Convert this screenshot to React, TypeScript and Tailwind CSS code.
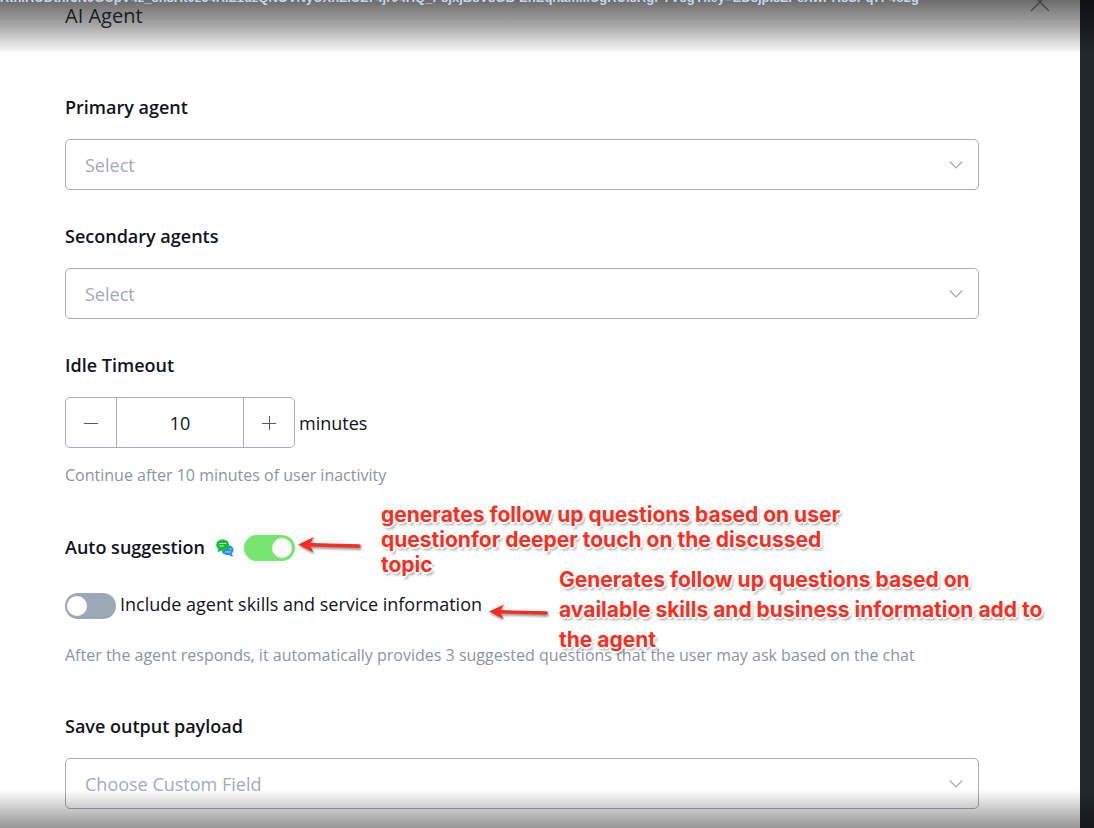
import React, { ReactNode, useState } from "react";

interface SelectFieldProps {
  id: string;
  label: string;
  placeholder: string;
}

interface SwitchProps {
  id: string;
  checked: boolean;
  onChange: (checked: boolean) => void;
}

interface NoteProps {
  className: string;
  children: ReactNode;
}

const SelectField: React.FC<SelectFieldProps> = ({
  id,
  label,
  placeholder,
}) => {
  return (
    <div className="flex flex-col gap-5">
      <label htmlFor={id} className="font-semibold">
        {label}
      </label>
      <div className="relative">
        <select
          id={id}
          className="w-full h-[51px] appearance-none rounded-[5px] border border-[#a5adb9] bg-white px-[19px] text-[#a2aab8]"
        >
          <option>{placeholder}</option>
        </select>
        <svg
          className="pointer-events-none absolute right-4 top-5 h-3 w-3.5"
          viewBox="0 0 14 12"
          fill="none"
          stroke="#a5abb5"
          strokeWidth="1.2"
          aria-hidden="true"
        >
          <path d="M0.8 2.5 L7 9 L13.2 2.5" />
        </svg>
      </div>
    </div>
  );
};

const Switch: React.FC<SwitchProps> = ({ id, checked, onChange }) => {
  return (
    <span className="relative flex h-[26px] w-[51px]">
      <input
        id={id}
        type="checkbox"
        role="switch"
        checked={checked}
        onChange={(e) => onChange(e.target.checked)}
        className="peer h-full w-full appearance-none rounded-full bg-[#9da7b5] checked:bg-[#77e570]"
      />
      <span className="pointer-events-none absolute left-0.5 top-[3px] h-5 w-5 rounded-full bg-white peer-checked:left-7" />
    </span>
  );
};

const ChatIcon = () => (
  <svg className="h-[18px] w-[18px]" viewBox="0 0 18 18" aria-hidden="true">
    <path
      d="M11.5 6c3.500 0 6 2.200 6 5.100 0 1.500-.6 2.700-1.600 3.500.1 1.100.5 1.900 1.200 2.900-1.500 0-2.700-.5-3.600-1.500-4.500.6-8-1.500-8-4.900C5.500 8.200 8 6 11.500 6z"
      fill="#2793f0"
    />
    <path
      d="M6.700.4c3.700 0 6.400 2.400 6.400 5.600s-2.700 5.600-6.400 5.600c-.6 0-1.200-.1-1.700-.2-.9.900-2.200 1.400-3.800 1.300.8-.8 1.200-1.600 1.200-2.600C1.100 9.100.3 7.600.3 6 .3 2.800 3 .4 6.700.4z"
      fill="#16b935"
    />
    <path d="M3.200 4.500h7M3.200 7h5" stroke="#b9f2bd" strokeWidth="1" />
    <path d="M13.800 10h1.800M9 13h5.500" stroke="#b8ddff" strokeWidth="1" />
  </svg>
);

const Arrow: React.FC<{ className: string }> = ({ className }) => (
  <svg className={className} viewBox="0 0 66 20" aria-hidden="true">
    <path
      d="M1 9.500 L17 2 L13.500 8 L62 9.300 A1.800 1.800 0 0 1 62 12.900 L13.500 11.500 L16.500 17.500 Z"
      fill="#f92d1f"
    />
  </svg>
);

const Note: React.FC<NoteProps> = ({ className, children }) => (
  <p
    className={`absolute whitespace-nowrap font-[Inter,sans-serif] text-[21px] font-bold text-[#fb2d20] [text-shadow:1px_1px_0_#fff,-1px_-1px_0_#fff,1px_-1px_0_#fff,-1px_1px_0_#fff,2px_0_0_#fff,0_2px_0_#fff,-2px_0_0_#fff,0_-2px_0_#fff,2px_3px_3px_#0006] ${className}`}
  >
    {children}
  </p>
);

const App = () => {
  const [minutes, setMinutes] = useState<number>(10);
  const [suggest, setSuggest] = useState<boolean>(true);
  const [skills, setSkills] = useState<boolean>(false);

  return (
    <div className="relative flex h-screen overflow-hidden bg-[#23282c] font-['Open_Sans','Noto_Sans',sans-serif] text-[18px] leading-6 text-[#101420]">
      <main className="mr-3.5 flex-1 bg-white pl-[65px] pr-[101px]">
        <header className="flex h-[95px] justify-between">
          <h1 className="pt-1 text-[20px] text-[#30363b]">AI Agent</h1>
          <button
            type="button"
            aria-label="Close"
            className="-mr-[71px] h-3 w-5"
          >
            <svg
              viewBox="0 0 20 12"
              fill="none"
              stroke="#8f9499"
              strokeWidth="1.500"
            >
              <path d="M1 11 L12 0 M19 11 L8 0" />
            </svg>
          </button>
        </header>

        <form>
          <div className="flex flex-col gap-[34px]">
            <SelectField
              id="primary"
              label="Primary agent"
              placeholder="Select"
            />
            <SelectField
              id="secondary"
              label="Secondary agents"
              placeholder="Select"
            />
            <div className="flex flex-col">
              <label htmlFor="timeout" className="font-semibold">
                Idle Timeout
              </label>
              <div className="mt-5 flex items-center gap-1">
                <div className="flex h-[51px] w-[230px] rounded-[5px] border border-[#a5adb9]">
                  <button
                    type="button"
                    aria-label="Decrease"
                    className="flex w-[51px] items-center justify-center border-r border-[#a5adb9]"
                    onClick={() => setMinutes(minutes - 1)}
                  >
                    <svg
                      className="h-3.5 w-3.5"
                      viewBox="0 0 14 14"
                      stroke="#555b64"
                    >
                      <path d="M0 7.500 H14" />
                    </svg>
                  </button>
                  <input
                    id="timeout"
                    type="text"
                    inputMode="numeric"
                    value={minutes}
                    onChange={(e) => setMinutes(Number(e.target.value) || 0)}
                    className="min-w-0 flex-1 text-center"
                  />
                  <button
                    type="button"
                    aria-label="Increase"
                    className="flex w-[51px] items-center justify-center border-l border-[#a5adb9]"
                    onClick={() => setMinutes(minutes + 1)}
                  >
                    <svg
                      className="h-3.5 w-3.5"
                      viewBox="0 0 14 14"
                      stroke="#555b64"
                    >
                      <path d="M0 7.500 H14 M7.500 0 V14" />
                    </svg>
                  </button>
                </div>
                <span>minutes</span>
              </div>
            </div>
          </div>
          <p className="mt-[15px] text-[16px] text-[#8a959e]">
            Continue after {minutes} minutes of user inactivity
          </p>

          <div className="mt-12 flex items-start">
            <label htmlFor="suggest" className="font-semibold">
              Auto suggestion
            </label>
            <span className="ml-[11px] mr-2.5 pt-1">
              <ChatIcon />
            </span>
            <Switch id="suggest" checked={suggest} onChange={setSuggest} />
          </div>
          <div className="mt-8 flex items-start gap-1">
            <Switch id="skills" checked={skills} onChange={setSkills} />
            <label htmlFor="skills" className="-mt-px">
              Include agent skills and service information
            </label>
          </div>
          <p className="mb-[47px] mt-6 text-[16px] text-[#8a959e]">
            After the agent responds, it automatically provides 3 suggested
            questions that the user may ask based on the chat
          </p>

          <SelectField
            id="payload"
            label="Save output payload"
            placeholder="Choose Custom Field"
          />
        </form>
      </main>

      {/* callouts drawn over the form */}
      <Arrow className="absolute left-[297px] top-[535px] h-5 w-[66px] drop-shadow-[1px_2px_1px_#0006]" />
      <Note className="left-[381px] top-[502px] leading-[25px]">
        generates follow up questions based on user
        <br />
        questionfor deeper touch on the discussed
        <br />
        topic
      </Note>
      <Arrow className="absolute left-[488px] top-[602px] h-5 w-[62px] drop-shadow-[1px_2px_1px_#0006]" />
      <Note className="left-[559px] top-[565px] leading-[30px]">
        Generates follow up questions based on
        <br />
        available skills and business information add to
        <br />
        the agent
      </Note>

      {/* edge shading */}
      <div className="pointer-events-none absolute inset-x-0 top-0 h-[54px] bg-linear-to-b from-black/58 via-black/33 to-transparent" />
      <div className="pointer-events-none absolute inset-x-0 bottom-0 h-[38px] bg-linear-to-t from-black/42 to-transparent" />
      <p className="pointer-events-none absolute -top-3 right-[175px] whitespace-nowrap font-['Liberation_Sans',sans-serif] text-[13px] font-bold leading-5 text-[#cbd5e2]">
        r1UQpRtnlRUDtnr5N0GUpV4z_8h8Rt0z64RlZ1dzQNOVNyUXhZlUZ74jr04HQ_P8jxjB8V8GB-EhEqhamMUgRUl8Rgr-7V8gYkey=ED8jpI8ZPeXwPH8SPq7F4o2g
      </p>
    </div>
  );
};

export default App;
